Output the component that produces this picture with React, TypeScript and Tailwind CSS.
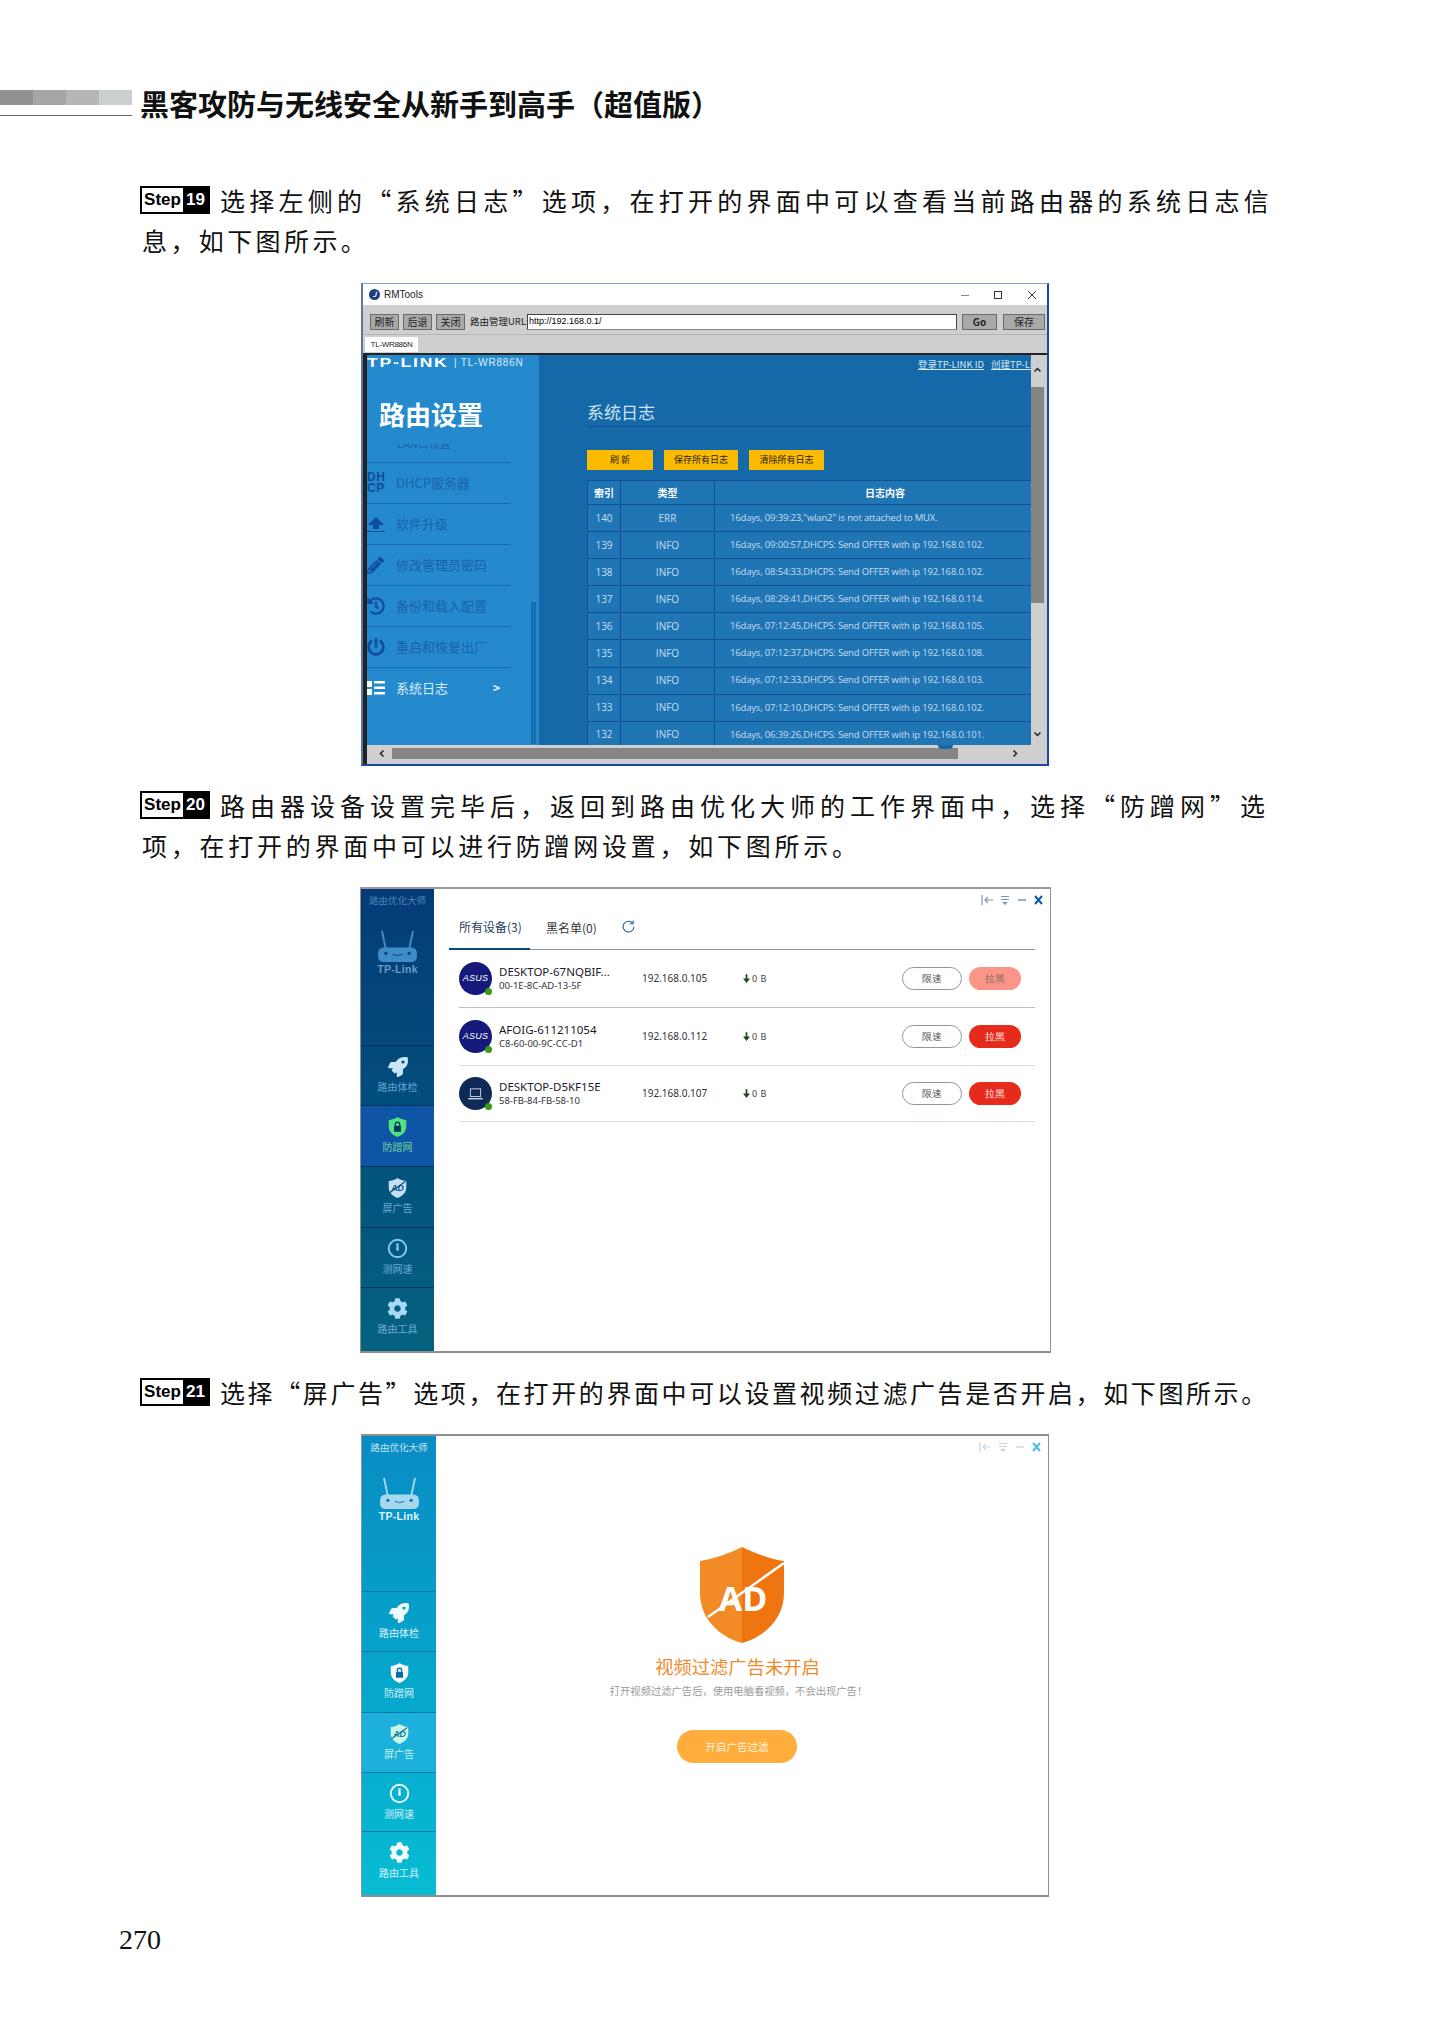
import React from "react";
import { FaRocket, FaCog, FaPencilAlt, FaHistory, FaPowerOff } from "react-icons/fa";

const LOGS = [
  ["140", "ERR", '16days, 09:39:23,"wlan2" is not attached to MUX.'],
  ["139", "INFO", "16days, 09:00:57,DHCPS: Send OFFER with ip 192.168.0.102."],
  ["138", "INFO", "16days, 08:54:33,DHCPS: Send OFFER with ip 192.168.0.102."],
  ["137", "INFO", "16days, 08:29:41,DHCPS: Send OFFER with ip 192.168.0.114."],
  ["136", "INFO", "16days, 07:12:45,DHCPS: Send OFFER with ip 192.168.0.105."],
  ["135", "INFO", "16days, 07:12:37,DHCPS: Send OFFER with ip 192.168.0.108."],
  ["134", "INFO", "16days, 07:12:33,DHCPS: Send OFFER with ip 192.168.0.103."],
  ["133", "INFO", "16days, 07:12:10,DHCPS: Send OFFER with ip 192.168.0.102."],
  ["132", "INFO", "16days, 06:39:26,DHCPS: Send OFFER with ip 192.168.0.101."],
];

const SHIELD = "M12 1C9 3 5.500 4.200 2 4.500V12C2 18 6.500 22 12 24C17.500 22 22 18 22 12V4.500C18.500 4.200 15 3 12 1Z";

function Step({ n }: { n: string }) {
  return (
    <span className="flex h-[28px] w-[70px] shrink-0 border-2 border-black font-['Liberation_Sans',sans-serif] text-[17px] font-bold leading-[24px] tracking-normal text-black">
      <span className="flex w-[41px] items-center justify-center">Step</span>
      <span className="flex flex-1 items-center justify-center bg-black text-white">{n}</span>
    </span>
  );
}

function BodyLine({ children, className }: { children: React.ReactNode; className: string }) {
  return <div className={"h-[40px] whitespace-nowrap text-[25px] leading-[40px] text-[#111] " + className}>{children}</div>;
}

function GrayBtn({ children, className }: { children: React.ReactNode; className: string }) {
  return (
    <div className={"flex h-[16px] items-center justify-center border border-[#6a6a6a] bg-[#a9a9a9] text-[10px] leading-none text-[#222] " + className}>
      {children}
    </div>
  );
}

function MenuRow({ icon, label, active }: { icon: React.ReactNode; label: string; active?: boolean }) {
  return (
    <div className="flex h-[41px] w-[144px] items-center border-t border-[#1a6cb0]">
      <div className="flex w-[29px] shrink-0 items-center text-[#0d4f9c]">{icon}</div>
      <span className={active ? "text-[13px] text-[#d8ecf8]" : "text-[13px] text-[#1b62a8]"}>{label}</span>
      {active && <span className="ml-[45px] text-[12px] font-bold text-white">&gt;</span>}
    </div>
  );
}

function RouterWindow() {
  return (
    <div className="ml-[361px] flex h-[483px] w-[688px] flex-col border-x-2 border-b-2 border-t border-b-[#1a48a0] border-l-[#5a74ac] border-r-[#1a48a0] border-t-[#8aa0cc] bg-white">
      <div className="flex h-[21px] shrink-0 items-center pl-[6px] pr-[11px]">
        <span className="flex h-[11px] w-[11px] items-center justify-center rounded-full bg-[#1b3f7c] text-[7px] font-bold italic text-white">J</span>
        <span className="ml-[4px] font-['Liberation_Sans',sans-serif] text-[10px] text-[#222]">RMTools</span>
        <svg viewBox="0 0 75 12" className="ml-auto h-[12px] w-[75px]" fill="none" stroke="#333">
          <path d="M0 6.500H8" stroke="#888" />
          <rect x="33.500" y="2.500" width="7" height="7" />
          <path d="M67 2L75 10M75 2L67 10" />
        </svg>
      </div>
      <div className="flex h-[30px] shrink-0 items-center border-b border-[#b5b5b5] bg-[#cfcfcf] pl-[7px] pt-[4px]">
        <GrayBtn className="w-[29px]">刷新</GrayBtn>
        <GrayBtn className="ml-[4px] w-[29px]">后退</GrayBtn>
        <GrayBtn className="ml-[4px] w-[29px]">关闭</GrayBtn>
        <span className="ml-[5px] w-[57px] whitespace-nowrap text-[9.5px] text-[#222]">路由管理URL:</span>
        <div className="flex h-[16px] w-[430px] items-center border border-[#444] border-b-[#888] bg-white pl-[1px] font-['Liberation_Sans',sans-serif] text-[9px] text-black">
          http://192.168.0.1/
        </div>
        <GrayBtn className="ml-[5px] w-[35px] font-bold">Go</GrayBtn>
        <GrayBtn className="ml-[6px] w-[42px]">保存</GrayBtn>
      </div>
      <div className="flex h-[18px] shrink-0 items-end bg-[#cfcfcf] pb-[1px] pl-[2px]">
        <div className="flex h-[15px] w-[53px] items-center justify-center bg-white font-['Liberation_Sans',sans-serif] text-[8px] tracking-[-0.3px] text-[#222]">TL-WR886N</div>
      </div>
      <div className="flex min-h-0 flex-1 flex-col border-l-[4px] border-t-[2px] border-l-[#222] border-r-0 border-t-[#222] bg-[#cfcfcf]">
        <div className="flex h-[390px] shrink-0">
          <div className="relative w-[172px] shrink-0 overflow-hidden bg-[#2589cd]">
            <div className="flex h-[14px] items-center whitespace-nowrap font-['Liberation_Sans',sans-serif] text-white">
              <span className="inline-block w-[82px] origin-left scale-x-[1.35] text-[13px] font-bold leading-none tracking-[1.3px]">TP-LINK</span>
              <span className="ml-[5px] text-[10px] tracking-[0.8px] text-[#dbeeff]">| TL-WR886N</span>
            </div>
            <div className="ml-[12px] mt-[31px] h-[28px] text-[26px] font-bold leading-[28px] text-white">路由设置</div>
            <div className="mt-[16px] h-[5px] overflow-hidden text-[11px] leading-[11px] text-[#1b62a8]">
              <div className="-mt-[6px] pl-[30px]">LAN口设置</div>
            </div>
            <div className="h-[13px]" />
            <MenuRow icon={<span className="font-['Liberation_Sans',sans-serif] text-[12px] font-bold leading-[11px] tracking-[0.5px]">DH<br />CP</span>} label="DHCP服务器" />
            <MenuRow
              icon={
                <svg viewBox="0 0 18 18" className="h-[18px] w-[18px]" fill="currentColor">
                  <path d="M9 2L17 10H12V14H6V10H1ZM0 16H18V17H0Z" />
                </svg>
              }
              label="软件升级"
            />
            <MenuRow icon={<FaPencilAlt size={17} />} label="修改管理员密码" />
            <MenuRow icon={<FaHistory size={18} />} label="备份和载入配置" />
            <MenuRow icon={<FaPowerOff size={18} />} label="重启和恢复出厂" />
            <MenuRow
              active
              icon={
                <svg viewBox="0 0 18 14" className="h-[14px] w-[18px]" fill="#fff">
                  <path d="M0 0H5V6H0ZM0 8H5V14H0ZM7 0H18V2.500H7ZM7 5.500H18V8H7ZM7 11H18V13.500H7Z" />
                </svg>
              }
              label="系统日志"
            />
            <div className="absolute right-[3px] top-[247px] h-[142px] w-[5px] bg-[#1a6cb0]" />
          </div>
          <div className="w-[492px] shrink-0 overflow-hidden bg-[#1569a8]">
            <div className="relative ml-[48px] h-[72px] w-[444px] border-b border-[#0f4f96]">
              <div className="absolute right-0 top-[2px] flex gap-[7px] whitespace-nowrap text-[9.5px] leading-[14px] text-[#d6eaf8]">
                <span className="underline">登录TP-LINK ID</span>
                <span className="w-[40px] overflow-hidden underline">创建TP-LINK ID</span>
              </div>
              <div className="pt-[46px] leading-[22px] text-[#cfe3f2]"><span className="text-[17px]">系统日志</span></div>
            </div>
            <div className="ml-[48px] mt-[23px] flex gap-[11px] text-[9px] text-[#1d1d1d]">
              <div className="flex h-[20px] w-[66px] items-center justify-center bg-[#fdbb00]">刷 新</div>
              <div className="flex h-[20px] w-[74px] items-center justify-center bg-[#fdbb00]">保存所有日志</div>
              <div className="flex h-[20px] w-[75px] items-center justify-center bg-[#fdbb00]">清除所有日志</div>
            </div>
            <div className="ml-[48px] mt-[10px] h-[265px] w-[444px] overflow-hidden border-l border-t border-[#0f4f96] bg-[#2075b5] font-['Open_Sans',sans-serif] text-[10px] text-[#c8dff0]">
              <div className="grid h-[24px] grid-cols-[33px_94px_1fr] items-center border-b border-[#0f4f96] text-center font-['Noto_Sans_CJK_SC',sans-serif] text-[10px] font-bold text-white">
                <div className="flex h-full items-center justify-center border-r border-[#0f4f96]">索引</div>
                <div className="flex h-full items-center justify-center border-r border-[#0f4f96]">类型</div>
                <div className="pl-[24px]">日志内容</div>
              </div>
              {LOGS.map((l) => (
                <div key={l[0]} className="grid h-[27.1px] grid-cols-[33px_94px_1fr] items-center border-b border-[#0f4f96]">
                  <div className="flex h-full items-center justify-center border-r border-[#0f4f96]">{l[0]}</div>
                  <div className="flex h-full items-center justify-center border-r border-[#0f4f96]">{l[1]}</div>
                  <div className="whitespace-nowrap pl-[15px] text-[9.5px] tracking-[-0.17px]">{l[2]}</div>
                </div>
              ))}
            </div>
          </div>
          <div className="flex w-[13px] shrink-0 flex-col items-center bg-[#cfcfcf]">
            <svg viewBox="0 0 10 8" className="mt-[12px] h-[6px] w-[9px]" fill="none" stroke="#222" strokeWidth="2">
              <path d="M1 6L5 2L9 6" />
            </svg>
            <div className="mt-[14px] h-[216px] w-full bg-[#858585]" />
            <svg viewBox="0 0 10 8" className="mt-[128px] h-[6px] w-[9px]" fill="none" stroke="#222" strokeWidth="2">
              <path d="M1 2L5 6L9 2" />
            </svg>
          </div>
        </div>
        <div className="relative flex h-[17px] w-[677px] items-center bg-[#cfcfcf]">
          <svg viewBox="0 0 8 10" className="ml-[12px] h-[9px] w-[6px]" fill="none" stroke="#222" strokeWidth="2">
            <path d="M6 1L2 5L6 9" />
          </svg>
          <div className="ml-[7px] h-[11px] w-[566px] bg-[#858585]" />
          <svg viewBox="0 0 8 10" className="ml-[54px] h-[9px] w-[6px]" fill="none" stroke="#222" strokeWidth="2">
            <path d="M2 1L6 5L2 9" />
          </svg>
          <div className="absolute left-[571px] top-0 h-[4px] w-[15px] rounded-b-full bg-[#1569a8]" />
        </div>
      </div>
    </div>
  );
}

function ShieldLock({ fill, lock }: { fill: string; lock: string }) {
  return (
    <svg viewBox="0 0 24 25" className="h-[22px] w-[21px]">
      <path d={SHIELD} fill={fill} />
      <rect x="8" y="11" width="8" height="7" rx="1" fill={lock} />
      <path d="M9.500 11V9.500a2.500 2.500 0 0 1 5 0V11" fill="none" stroke={lock} strokeWidth="1.500" />
    </svg>
  );
}

function ShieldAd({ fill, mark }: { fill: string; mark: string }) {
  return (
    <svg viewBox="0 0 24 25" className="h-[22px] w-[21px]">
      <path d={SHIELD} fill={fill} />
      <text x="12" y="16" textAnchor="middle" fontSize="10" fontWeight="700" fontFamily="Liberation Sans" fontStyle="italic" fill={mark}>AD</text>
      <path d="M3 18L21 5" stroke={mark} strokeWidth="1.300" />
    </svg>
  );
}

function Gauge({ color }: { color: string }) {
  return (
    <svg viewBox="0 0 24 24" className="h-[21px] w-[21px]" fill="none" stroke={color} strokeWidth="2.200">
      <circle cx="12" cy="12" r="10" />
      <path d="M12 6V13" strokeWidth="2.500" />
      <circle cx="12" cy="13" r="1.500" fill={color} stroke="none" />
    </svg>
  );
}

function RouterLogo({ body, eye }: { body: string; eye: string }) {
  return (
    <svg viewBox="0 0 42 34" className="h-[33px] w-[41px]">
      <path d="M5 1L9 20M37 1L33 20" stroke={body} strokeWidth="2" />
      <rect x="1" y="18" width="40" height="15" rx="5.500" fill={body} />
      <circle cx="9" cy="24" r="1.700" fill={eye} />
      <circle cx="33" cy="24" r="1.700" fill={eye} />
      <path d="M16 25Q21 28 26 25" fill="none" stroke={eye} strokeWidth="1" />
    </svg>
  );
}

function WinCtl({ c, x }: { c: string; x: string }) {
  return (
    <svg viewBox="0 0 62 12" className="absolute right-[7px] top-[5px] h-[12px] w-[62px]" fill="none" stroke={c} strokeWidth="1.200">
      <path d="M1 1V11M12 6H4M7 3L4 6L7 9" />
      <path d="M20 2.500H28M20 5.500H28" />
      <path d="M21 8H27L24 11Z" fill={c} stroke="none" />
      <path d="M37 6H45" strokeWidth="1.500" />
      <path d="M54 2L61 10M61 2L54 10" stroke={x} strokeWidth="2" />
    </svg>
  );
}

type NavItem = { icon: React.ReactNode; label: string; h: string; bg: string; text: string };

function Sidebar({ items, bg, title, tp, headH, line, logo, w }: { items: NavItem[]; bg: string; title: string; tp: string; headH: string; line: string; logo: React.ReactNode; w: string }) {
  return (
    <div className={"flex shrink-0 flex-col bg-gradient-to-b " + w + " " + bg}>
      <div className={"flex shrink-0 flex-col items-center pt-[3px] " + headH}>
        <div className={"text-[9.5px] leading-[16px] " + title}>路由优化大师</div>
        <div className="mt-[22px]">{logo}</div>
        <div className={"font-['Liberation_Sans',sans-serif] text-[10.5px] font-bold leading-[13px] tracking-[0.3px] " + tp}>TP-Link</div>
      </div>
      {items.map((it) => (
        <div key={it.label} className={"flex shrink-0 flex-col items-center border-t pt-[9px] " + line + " " + it.h + " " + it.bg}>
          <div className="flex h-[23px] items-center">{it.icon}</div>
          <div className={"mt-[1px] text-[10px] leading-[16px] " + it.text}>{it.label}</div>
        </div>
      ))}
    </div>
  );
}

function Avatar({ kind }: { kind: "asus" | "pc" }) {
  return (
    <div className={kind === "asus" ? "relative flex h-[33px] w-[33px] shrink-0 items-center justify-center rounded-full bg-[#15197a]" : "relative flex h-[33px] w-[33px] shrink-0 items-center justify-center rounded-full bg-[#102a58]"}>
      {kind === "asus" ? (
        <span className="font-['Liberation_Sans',sans-serif] text-[9px] italic tracking-[0.2px] text-white">ASUS</span>
      ) : (
        <svg viewBox="0 0 18 14" className="h-[12px] w-[17px]" fill="none" stroke="#dbe4f0" strokeWidth="1">
          <rect x="3" y="1" width="12" height="9" />
          <path d="M0.500 12.500H17.500" strokeWidth="1.500" />
        </svg>
      )}
      <span className="absolute bottom-0 right-0 h-[7px] w-[7px] rounded-full bg-[#3c9a16]" />
    </div>
  );
}

function DeviceRow({ kind, name, mac, ip, h, line, faded }: { kind: "asus" | "pc"; name: string; mac: string; ip: string; h: string; line: string; faded?: boolean }) {
  return (
    <div className={"flex items-center border-b font-['Noto_Sans',sans-serif] " + h + " " + line}>
      <Avatar kind={kind} />
      <div className="ml-[7px] w-[143px] shrink-0">
        <div className="text-[11.5px] leading-[14px] text-[#1a1a2a]">{name}</div>
        <div className="text-[9.5px] leading-[13px] text-[#333]">{mac}</div>
      </div>
      <div className="w-[101px] shrink-0 text-[10px] text-[#333]">{ip}</div>
      <div className="flex w-[159px] shrink-0 items-center">
        <svg viewBox="0 0 8 10" className="h-[9px] w-[7px]" fill="#1d4a1d">
          <path d="M3 0H5V5H8L4 10L0 5H3Z" />
        </svg>
        <span className="ml-[2px] text-[9px] tracking-[0.5px] text-[#444]">0 B</span>
      </div>
      <div className="flex h-[23px] w-[60px] shrink-0 items-center justify-center rounded-full border border-[#8a97a8] text-[10px] text-[#555]">限速</div>
      <div className={faded ? "ml-[7px] flex h-[23px] w-[52px] shrink-0 items-center justify-center rounded-full bg-[#fb9587] text-[10px] text-[#8a6a5a]" : "ml-[7px] flex h-[23px] w-[52px] shrink-0 items-center justify-center rounded-full bg-[#e62a1c] text-[10px] text-[#ffe6e0]"}>拉黑</div>
    </div>
  );
}

function DevicesWindow() {
  const items: NavItem[] = [
    { icon: <FaRocket size={20} color="#c9e6f8" />, label: "路由体检", h: "h-[60px]", bg: "", text: "text-[#5da6dc]" },
    { icon: <ShieldLock fill="#4fe37f" lock="#08345f" />, label: "防蹭网", h: "h-[61px]", bg: "bg-[#0e55a6]", text: "text-[#6fd39a]" },
    { icon: <ShieldAd fill="#c3e0f5" mark="#0a4f80" />, label: "屏广告", h: "h-[61px]", bg: "", text: "text-[#6da9d6]" },
    { icon: <Gauge color="#8cc8ee" />, label: "测网速", h: "h-[60px]", bg: "", text: "text-[#6da9d6]" },
    { icon: <FaCog size={21} color="#a9d8f4" />, label: "路由工具", h: "h-[65px]", bg: "", text: "text-[#6da9d6]" },
  ];
  return (
    <div className="ml-[360px] flex h-[466px] w-[691px] border-x border-y-2 border-[#8f8f8f] border-t-[#9a9a9a]">
      <Sidebar w="w-[73px]" items={items} bg="from-[#053b78] to-[#05627f]" title="text-[#4f82b2]" tp="text-[#6b9cc6]" headH="h-[156px]" line="border-[#03305c]" logo={<RouterLogo body="#3f8dc8" eye="#0a3f78" />} />
      <div className="relative flex-1 bg-white">
        <WinCtl c="#7f97b2" x="#0a5ca8" />
        <div className="ml-[15px] flex h-[61px] w-[586px] items-end border-b border-[#8f96a0] font-['Noto_Sans_CJK_SC',sans-serif]">
          <div className="-mb-px w-[81px] border-b-2 border-[#0a4680] pb-[12px] pl-[10px] text-[12px] leading-[18px] text-[#1e3a5c]">所有设备(3)</div>
          <div className="w-[77px] pb-[12px] pl-[16px] text-[12px] leading-[18px] text-[#333]">黑名单(0)</div>
          <svg viewBox="0 0 14 14" className="mb-[16px] ml-[15px] h-[13px] w-[13px]" fill="none" stroke="#2a5f9a" strokeWidth="1.200">
            <path d="M11.500 3.500A5.800 5.800 0 1 0 12.800 7" />
            <path d="M12 0.500V4H8.500" />
          </svg>
        </div>
        <div className="ml-[25px] w-[576px]">
          <DeviceRow kind="asus" name="DESKTOP-67NQBIF..." mac="00-1E-8C-AD-13-5F" ip="192.168.0.105" h="h-[58px]" line="border-[#b3bfca]" faded />
          <DeviceRow kind="asus" name="AFOIG-611211054" mac="C8-60-00-9C-CC-D1" ip="192.168.0.112" h="h-[58px]" line="border-[#d8dde0]" />
          <DeviceRow kind="pc" name="DESKTOP-D5KF15E" mac="58-FB-84-FB-58-10" ip="192.168.0.107" h="h-[56px]" line="border-[#d8dde0]" />
        </div>
      </div>
    </div>
  );
}

function AdWindow() {
  const items: NavItem[] = [
    { icon: <FaRocket size={20} color="#effaff" />, label: "路由体检", h: "h-[60px]", bg: "", text: "text-[#d3f0fb]" },
    { icon: <ShieldLock fill="#f2fbff" lock="#0a6aa0" />, label: "防蹭网", h: "h-[61px]", bg: "", text: "text-[#d3f0fb]" },
    { icon: <ShieldAd fill="#c9f7e4" mark="#0a7aa8" />, label: "屏广告", h: "h-[60px]", bg: "bg-[#1cb0dc]", text: "text-[#c9f5ea]" },
    { icon: <Gauge color="#f0faff" />, label: "测网速", h: "h-[59px]", bg: "", text: "text-[#d3f0fb]" },
    { icon: <FaCog size={21} color="#f0faff" />, label: "路由工具", h: "h-[65px]", bg: "", text: "text-[#d3f0fb]" },
  ];
  return (
    <div className="ml-[361px] flex h-[463px] w-[688px] border-x border-y-2 border-[#8f8f8f]">
      <Sidebar w="w-[74px]" items={items} bg="from-[#0a8cc4] to-[#08bcd2]" title="text-[#bfe6f6]" tp="text-[#e0f5fc]" headH="h-[155px]" line="border-[#0878a8]" logo={<RouterLogo body="#a6d8ee" eye="#0a7ab0" />} />
      <div className="relative flex flex-1 flex-col items-center bg-white pt-[111px]">
        <WinCtl c="#c4d8e4" x="#45bde8" />
        <svg viewBox="0 0 84 96" className="ml-[-1px] h-[96px] w-[84px]">
          <path d="M42 0C30 6 14 12 0 14V46C0 72 20 90 42 96Z" fill="#f28a25" />
          <path d="M42 0C54 6 70 12 84 14V46C84 72 64 90 42 96Z" fill="#ee7510" />
          <text x="43" y="64" textAnchor="middle" fontSize="34" fontWeight="700" fontFamily="Open Sans" fill="#fff">AD</text>
          <path d="M8 70L84 16" stroke="#fff" strokeWidth="2.500" />
        </svg>
        <div className="ml-[-9px] mt-[9px] text-[18.300px] leading-[28px] text-[#f08a2a]">视频过滤广告未开启</div>
        <div className="ml-[-7px] mt-[3px] text-[10.300px] leading-[16px] text-[#9a9a9a]">打开视频过滤广告后，使用电脑看视频，不会出现广告！</div>
        <div className="ml-[-10px] mt-[31px] flex h-[33px] w-[120px] items-center justify-center rounded-full bg-[#ffae3d] text-[10.500px] text-[#fff4e0]">开启广告过滤</div>
      </div>
    </div>
  );
}

export default function App() {
  return (
    <div className="h-[2026px] w-[1441px] overflow-hidden bg-white pt-[90px] font-['Noto_Sans_CJK_SC',sans-serif]">
      <div className="flex h-[28px] items-start">
        <div className="w-[132px] shrink-0">
          <div className="flex h-[15px]">
            <div className="w-[33px] bg-[#929292]" />
            <div className="w-[33px] bg-[#a6a6a6]" />
            <div className="w-[33px] bg-[#b6b6b6]" />
            <div className="w-[33px] bg-[#cbcfcf]" />
          </div>
          <div className="mt-[10px] h-px bg-[#666]" />
        </div>
        <div className="ml-[8px] whitespace-nowrap text-[29px] font-bold leading-[26px] text-[#111]">黑客攻防与无线安全从新手到高手（超值版）</div>
      </div>
      <div className="ml-[140px] mt-[62px]">
        <BodyLine className="flex items-center tracking-[4.250px]"><Step n="19" /><span className="ml-[10px]">选择左侧的“系统日志”选项，在打开的界面中可以查看当前路由器的系统日志信</span></BodyLine>
        <BodyLine className="pl-[2px] tracking-[3.400px]">息，如下图所示。</BodyLine>
      </div>
      <div className="mt-[23px]"><RouterWindow /></div>
      <div className="ml-[140px] mt-[19px]">
        <BodyLine className="flex items-center tracking-[5px]"><Step n="20" /><span className="ml-[10px]">路由器设备设置完毕后，返回到路由优化大师的工作界面中，选择“防蹭网”选</span></BodyLine>
        <BodyLine className="pl-[2px] tracking-[3.750px]">项，在打开的界面中可以进行防蹭网设置，如下图所示。</BodyLine>
      </div>
      <div className="mt-[22px]"><DevicesWindow /></div>
      <div className="ml-[140px] mt-[19px]">
        <BodyLine className="flex items-center tracking-[2.600px]"><Step n="21" /><span className="ml-[10px]">选择“屏广告”选项，在打开的界面中可以设置视频过滤广告是否开启，如下图所示。</span></BodyLine>
      </div>
      <div className="mt-[22px]"><AdWindow /></div>
      <div className="ml-[119px] mt-[26px] font-['Liberation_Serif',serif] text-[28px] leading-[34px] text-[#111]">270</div>
    </div>
  );
}
